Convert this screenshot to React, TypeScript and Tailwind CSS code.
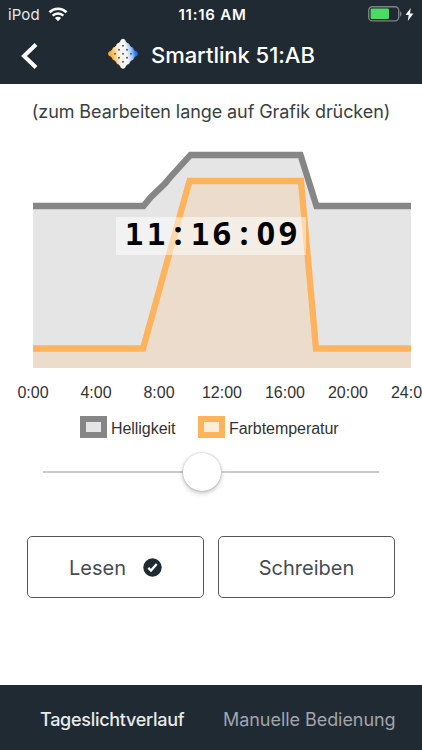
const hours = ["0:00", "4:00", "8:00", "12:00", "16:00", "20:00", "24:00"];

function StatusBar() {
  return (
    <div className="flex h-7 items-center px-2 text-[15px] leading-7 text-[#e4e7e9]">
      <div className="flex flex-1 items-center gap-2">
        <span className="pt-px tracking-[0.1px]">iPod</span>
        <svg width="20" height="15" viewBox="0 0 20 15" fill="none">
          <path d="M1.5 5.2a12.2 12.2 0 0 1 17 0" stroke="#fff" strokeWidth="2.6" />
          <path d="M4.6 8.6a7.8 7.8 0 0 1 10.8 0" stroke="#fff" strokeWidth="2.4" />
          <path d="M10 14.2 6.9 11.1a4.5 4.5 0 0 1 6.2 0Z" fill="#fff" />
        </svg>
      </div>
      <span className="ml-1 pt-px font-semibold tracking-[0.75px] text-white">11:16 AM</span>
      <div className="flex flex-1 items-center justify-end gap-[3px] pl-px">
        <svg width="36" height="16" viewBox="0 0 36 16">
          <rect x="2.7" y="0.7" width="30" height="14.2" rx="3.6" fill="none" stroke="#7b8287" strokeWidth="1.4" />
          <rect x="4.6" y="2.6" width="18.4" height="10.4" rx="1.2" fill="#4cd964" />
          <path d="M34 5.2c2 .8 2 4.4 0 5.2Z" fill="#7b8287" />
        </svg>
        <svg width="9" height="13" viewBox="0 0 9 13">
          <path d="M5.8 0 .4 7.1h3.3L2.8 13l5.6-7.6H5Z" fill="#fff" />
        </svg>
      </div>
    </div>
  );
}

function Logo() {
  const steps = [-8.5, -2.83, 2.83, 8.5];
  const dots = [-5.66, 0, 5.66];
  return (
    <svg width="30" height="32" viewBox="-15 -15.800 30 32">
      <defs>
        <linearGradient id="logo" gradientUnits="userSpaceOnUse" x1="-15" y1="5" x2="15" y2="-1">
          <stop offset="0" stopColor="#f79a10" />
          <stop offset="0.18" stopColor="#fbba58" />
          <stop offset="0.38" stopColor="#fdf1e2" />
          <stop offset="0.62" stopColor="#f6f8fc" />
          <stop offset="0.8" stopColor="#9fc4f8" />
          <stop offset="0.9" stopColor="#2c80f2" />
          <stop offset="1" stopColor="#0b61dc" />
        </linearGradient>
        <clipPath id="bumps">
          <rect x="-10.700" y="-10.700" width="21.400" height="21.400" rx="3" transform="rotate(45)" />
          {steps.flatMap((a) =>
            steps.map((b) => <circle key={`${a}/${b}`} cx={a} cy={b} r="2.800" transform="rotate(45)" />),
          )}
        </clipPath>
      </defs>
      <rect x="-15" y="-15.500" width="30" height="31" fill="url(#logo)" clipPath="url(#bumps)" />
      {dots.flatMap((a) =>
        dots.map((b) => (
          <circle key={`${a}/${b}`} cx={a} cy={b} r="1" fill="#52606d" transform="rotate(45)" />
        )),
      )}
    </svg>
  );
}

function Clock() {
  return (
    <div className="absolute left-[116px] top-[77px] flex h-[38px] w-[190px] items-baseline bg-white/50 pl-[7px] font-['Noto_Sans',sans-serif] text-[32px] font-bold leading-[32px] text-black">
      {"11:16:09".split("").map((char, i) =>
        char === "1" ? (
          <span key={i} className="w-[22px] text-center font-['DejaVu_Sans_Mono',monospace] text-[31px]">{char}</span>
        ) : (
          <span key={i} className="w-[22px] text-center">{char}</span>
        ),
      )}
    </div>
  );
}

function Chart() {
  return (
    <div className="relative h-[228px]">
      <svg className="block" width="422" height="228" viewBox="0 140 422 228">
        <path d="M33 206H143.5L190.5 155H300.5L316.5 206H411V368H33Z" fill="#e5e5e5" />
        <path d="M33 348.5H143L189.5 181H301L316 348.5H411V368H33Z" fill="#ebdccc" />
        <path d="M33 348.5H143L189.5 181H301L316 348.5H411" fill="none" stroke="#feb35c" strokeWidth="6.3" />
        <path d="M33 206H143.5L151 197 165 183.5 170 177.500 190.5 155H300.5L316.500 206H411" fill="none" stroke="#858685" strokeWidth="6.3" />
      </svg>
      <Clock />
    </div>
  );
}

export default function App() {
  return (
    <div className="flex h-[750px] w-[422px] flex-col overflow-hidden bg-white font-['Inter',sans-serif]">
      <header className="h-[84px] shrink-0 bg-[#202a33]">
        <StatusBar />
        <div className="flex h-14 items-center pb-1 text-white">
          <svg className="ml-5 mt-[3px]" width="20" height="28" viewBox="0 0 20 28">
            <path d="M16 2.500 4 14 16 25.500" fill="none" stroke="#fff" strokeWidth="4" />
          </svg>
          <div className="ml-[68px] flex items-center gap-[13px]">
            <Logo />
            <h1 className="whitespace-nowrap pt-[3px] text-[22px] font-medium tracking-[-0.05px]">Smartlink 51:AB</h1>
          </div>
        </div>
      </header>
      <main className="flex-1">
        <p className="h-14 whitespace-nowrap text-center text-[18px] leading-[55px] tracking-[-0.08px] text-[#3c3e40]">
          (zum Bearbeiten lange auf Grafik drücken)
        </p>
        <Chart />
        <div className="flex h-12 w-[500px] pl-[1.5px] font-['Liberation_Sans',sans-serif] text-[16px] leading-[49px] text-[#333]">
          {hours.map((hour) => (
            <span key={hour} className="w-[63px] text-center">{hour}</span>
          ))}
        </div>
        <div className="flex h-[22px] items-center pl-20 font-['Liberation_Sans',sans-serif] text-[16px] tracking-[-0.05px] text-[#333]">
          <span className="h-[22px] w-[27px] border-[6px] border-[#858685] bg-[#e5e5e5]" />
          <span className="ml-1 w-[87px] pt-1">Helligkeit</span>
          <span className="h-[22px] w-[27px] border-[6px] border-[#feb35c] bg-[#ffeddb]" />
          <span className="ml-1 pt-1">Farbtemperatur</span>
        </div>
        <div className="ml-[43px] mt-[14px] flex h-[40px] w-[336px] items-center">
          <div className="h-[2px] w-[140px] bg-[#c9cbca]" />
          <div className="h-[38px] w-[38px] rounded-full bg-white shadow-[0_2px_5px_rgba(0,0,0,0.25),0_0_2px_rgba(0,0,0,0.25)]" />
          <div className="h-[2px] flex-1 bg-[#c9cbca]" />
        </div>
        <div className="ml-[27px] mt-11 flex gap-[14px] text-[20px] text-[#484b51]">
          <button className="flex h-[62px] w-[177px] items-center rounded-[5px] border border-[#55585b] pl-[41px]">
            <span className="pt-px">Lesen</span>
            <svg className="ml-[17px]" width="19" height="19" viewBox="0 0 19 19">
              <circle cx="9.500" cy="9.500" r="9.200" fill="#202a33" />
              <path d="m5.300 9.900 2.700 2.700 5.700-6.500" fill="none" stroke="#fff" strokeWidth="2.300" />
            </svg>
          </button>
          <button className="h-[62px] w-[177px] rounded-[5px] border border-[#55585b] pt-px">Schreiben</button>
        </div>
      </main>
      <nav className="flex h-[65px] shrink-0 items-center whitespace-nowrap bg-[#202a33] pl-10 pt-1 text-[18px]">
        <span className="w-[183px] font-medium tracking-[-0.28px] text-[#e8eaeb]">Tageslichtverlauf</span>
        <span className="tracking-[-0.05px] text-[#a0a5ac]">Manuelle Bedienung</span>
      </nav>
    </div>
  );
}
